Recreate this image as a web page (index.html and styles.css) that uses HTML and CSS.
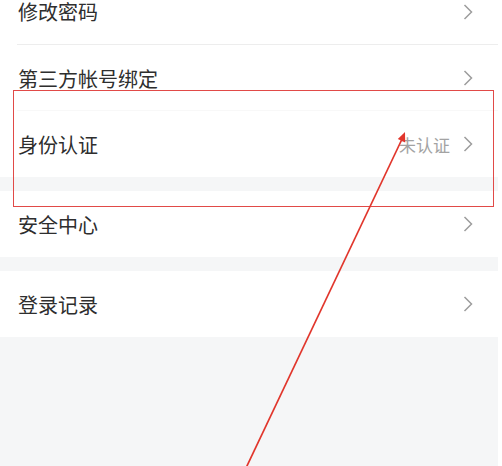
FILE: index.html
```html
<!DOCTYPE html>
<html lang="zh-CN">
<head>
    <meta charset="UTF-8">
    <title>账号与安全</title>
    <link rel="stylesheet" href="styles.css">
</head>
<body>

<div class="page">
    <div class="group">
        <div class="row line top">
            <span class="label">修改密码</span>
            <svg class="arrow" width="10" height="16" viewBox="0 0 10 16"><polyline points="1.5,1 8.5,8 1.5,15"/></svg>
        </div>
        <div class="row line faint">
            <span class="label">第三方帐号绑定</span>
            <svg class="arrow" width="10" height="16" viewBox="0 0 10 16"><polyline points="1.5,1 8.5,8 1.5,15"/></svg>
        </div>
        <div class="row">
            <span class="label">身份认证</span>
            <span class="value">未认证</span>
            <svg class="arrow" width="10" height="16" viewBox="0 0 10 16"><polyline points="1.5,1 8.5,8 1.5,15"/></svg>
        </div>
    </div>

    <div class="group">
        <div class="row">
            <span class="label">安全中心</span>
            <svg class="arrow" width="10" height="16" viewBox="0 0 10 16"><polyline points="1.5,1 8.5,8 1.5,15"/></svg>
        </div>
    </div>

    <div class="group">
        <div class="row">
            <span class="label">登录记录</span>
            <svg class="arrow" width="10" height="16" viewBox="0 0 10 16"><polyline points="1.5,1 8.5,8 1.5,15"/></svg>
        </div>
    </div>

    <div class="mark-box"></div>
    <svg class="mark-arrow" width="502" height="466" viewBox="0 0 502 466">
        <line x1="246" y1="468" x2="403" y2="137" stroke="#e1362c" stroke-width="1.7"/>
        <polygon points="405,132 397.8,139 405.2,142.5" fill="#e1362c"/>
    </svg>
</div>

</body>
</html>
```

FILE: styles.css
```css
html {
    background: #fff;
}

body {
    margin: 0;
    font-family: "Noto Sans CJK SC", "Noto Sans", sans-serif;
}

.page {
    position: relative;
    width: 498px;
    height: 466px;
    overflow: hidden;
    background: #f5f6f7;
}

.group {
    background: #fff;
    margin-bottom: 14px;
}

.row {
    display: flex;
    align-items: center;
    height: 66px;
    padding: 0 25px 0 18px;
    box-sizing: border-box;
    position: relative;
}

.row.top {
    height: 45px;
    padding-bottom: 21px;
    line-height: 24px;
}

.row.line::after {
    content: "";
    position: absolute;
    left: 17px;
    right: -4px;
    bottom: 0;
    height: 1px;
    background: #ededed;
}

.row.line.faint::after {
    background: #f8f8f8;
}

.label {
    flex: 1;
    font-size: 20px;
    color: #2e2e2e;
}

.value {
    font-size: 17px;
    color: #a3a3a3;
    margin-right: 13px;
}

.arrow {
    fill: none;
    stroke: #9d9d9d;
    stroke-width: 1.5;
}

.mark-box {
    position: absolute;
    left: 13px;
    top: 90px;
    width: 479px;
    height: 115px;
    border: 1.5px solid #e14a48;
}

.mark-arrow {
    position: absolute;
    left: 0;
    top: 0;
}
```
